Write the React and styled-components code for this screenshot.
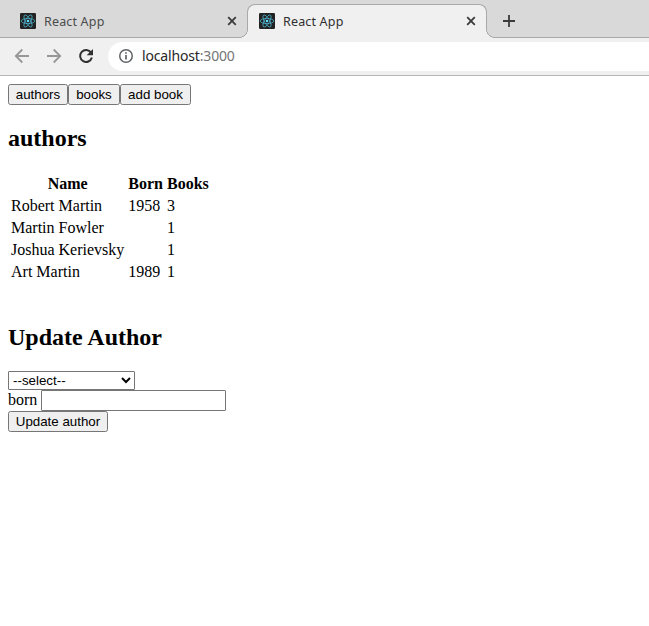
import React from "react";
import styled, { createGlobalStyle } from "styled-components";

const GlobalStyle = createGlobalStyle`
  body { margin: 0; background: #fff; color: #000; font-family: "Liberation Serif", serif; font-size: 16px; }
`;

const TabStrip = styled.div`
  display: flex;
  align-items: flex-end;
  height: 38px;
  box-sizing: border-box;
  background: #d9d9d9;
  box-shadow: inset 0 -1px #a9a9a9;
  font-family: "Noto Sans", sans-serif;
`;

const Tab = styled.div`
  position: relative;
  display: flex;
  align-items: center;
  box-sizing: border-box;
  width: ${(p) => (p.$active ? 240 : 247)}px;
  height: 34px;
  padding: ${(p) => (p.$active ? "0 10px 1px 11px" : "0 10px 0 20px")};
  color: ${(p) => (p.$active ? "#2f2f2f" : "#4b4b4b")};
  ${(p) =>
    p.$active &&
    `
    background: #f0f0f0;
    border: 1px solid #a9a9a9;
    border-bottom: 0;
    border-radius: 8px 8px 0 0;
    &::before, &::after {
      content: "";
      position: absolute;
      bottom: 0;
      width: 9px;
      height: 9px;
    }
    &::before {
      left: -9px;
      background: radial-gradient(circle at 0 0, #d9d9d9 7.8px, #a9a9a9 8.3px 8.7px, #f0f0f0 9.2px);
    }
    &::after {
      right: -9px;
      background: radial-gradient(circle at 100% 0, #d9d9d9 7.8px, #a9a9a9 8.3px 8.7px, #f0f0f0 9.2px);
    }
  `}
`;

const TabTitle = styled.span`
  flex: 1;
  margin-left: 8px;
  padding-top: 1px;
  font-size: 12.5px;
  line-height: 19px;
  letter-spacing: 0.17px;
`;

const Icon = styled.svg`
  display: block;
  flex: none;
`;

const NewTab = styled.div`
  display: flex;
  align-items: center;
  height: 34px;
  margin-left: 15px;
`;

const Toolbar = styled.div`
  display: flex;
  align-items: center;
  box-sizing: border-box;
  height: 38px;
  padding: 0 0 1px 14px;
  background: #f0f0f0;
  border-bottom: 1px solid #b6b6b6;
`;

const NavIcons = styled.div`
  display: flex;
  gap: 16px;
  width: 94px;
`;

const AddressBar = styled.div`
  display: flex;
  align-items: center;
  flex: 1;
  box-sizing: border-box;
  height: 29px;
  padding-left: 11px;
  background: #fff;
  border-radius: 15px 0 0 15px;
  font-family: "Noto Sans", sans-serif;
  font-size: 14px;
  line-height: 20px;
`;

const Url = styled.span`
  margin-left: 9px;
  color: #272727;
  letter-spacing: -0.16px;
`;

const Port = styled.span`
  color: #757575;
`;

const Page = styled.main`
  padding: 8px;
`;

const Nav = styled.nav`
  display: flex;
`;

const Button = styled.button`
  display: block;
  box-sizing: border-box;
  width: ${(p) => p.$width}px;
  height: 21px;
  margin: 0;
  padding: 0;
  white-space: nowrap;
  border: 1px solid #767676;
  border-radius: 2.5px;
  background: #efefef;
  color: #000;
  font: 13.333px "Liberation Sans", sans-serif;
`;

const Heading = styled.h2`
  margin: 0;
  padding: 20px 0;
  font-size: 24px;
  line-height: 27px;
`;

const Table = styled.table`
  border-spacing: 2px;
  line-height: 18px;
  margin-bottom: 20px;

  th, td { padding: 1px; }
  td { text-align: left; }
`;

const Select = styled.select`
  display: block;
  box-sizing: border-box;
  width: 127px;
  height: 19px;
  margin: 0;
  border: 1px solid #767676;
  border-radius: 1px;
  background-color: #fff;
  color: #000;
  font: 13.333px "Liberation Sans", sans-serif;
`;

const Field = styled.label`
  display: flex;
  align-items: center;
  gap: 4px;
  height: 21px;
  line-height: 18px;
`;

const Input = styled.input`
  box-sizing: border-box;
  width: 185px;
  height: 21px;
  margin: 0;
  border: 1px solid #767676;
  border-radius: 1px;
  font: 13.333px "Liberation Sans", sans-serif;
`;

const FieldName = styled.span`
  margin-top: -2px;
`;

const authors = [
  ["Robert Martin", "1958", 3],
  ["Martin Fowler", "", 1],
  ["Joshua Kerievsky", "", 1],
  ["Art Martin", "1989", 1],
];

const ReactLogo = () => (
  <Icon width="16" height="16" viewBox="0 0 16 16">
    <rect width="16" height="16" rx="1.2" fill="#222" />
    <g fill="none" stroke="#4fb3ce" strokeWidth="0.75">
      <ellipse cx="8" cy="8" rx="6.8" ry="2.6" />
      <ellipse cx="8" cy="8" rx="6.8" ry="2.6" transform="rotate(60 8 8)" />
      <ellipse cx="8" cy="8" rx="6.8" ry="2.6" transform="rotate(120 8 8)" />
    </g>
    <circle cx="8" cy="8" r="1.3" fill="#61dafb" />
  </Icon>
);

const Close = () => (
  <Icon width="10" height="10" viewBox="0 0 10 10" stroke="#3a3a3a" strokeWidth="1.8">
    <path d="M1.2 1.2l7.6 7.6M8.8 1.2L1.2 8.8" />
  </Icon>
);

const Arrow = ({ forward }) => (
  <Icon width="16" height="16" viewBox="0 0 16 16" fill="none" stroke="#979797" strokeWidth="1.8">
    <path
      d={forward ? "M1 8h13M7.7 1.5L14.2 8l-6.5 6.5" : "M15 8H2M8.3 1.5L1.8 8l6.5 6.5"}
    />
  </Icon>
);

const Reload = () => (
  <Icon width="16" height="16" viewBox="0 0 16 16">
    <path d="M13.1 4.6A6 6 0 1 0 13.9 9.6" fill="none" stroke="#303030" strokeWidth="2" />
    <path d="M15 1v6.3H8.7z" fill="#303030" />
  </Icon>
);

const Info = () => (
  <Icon width="14" height="14" viewBox="0 0 14 14">
    <circle cx="7" cy="7" r="6.25" fill="none" stroke="#5f6368" strokeWidth="1.5" />
    <path d="M7 6v4.5M7 3.3v1.5" stroke="#5f6368" strokeWidth="1.7" />
  </Icon>
);

const BrowserTab = ({ active }) => (
  <Tab $active={active}>
    <ReactLogo />
    <TabTitle>React App</TabTitle>
    <Close />
  </Tab>
);

export default function App() {
  return (
    <>
      <GlobalStyle />
      <TabStrip>
        <BrowserTab />
        <BrowserTab active />
        <NewTab>
          <Icon width="14" height="14" viewBox="0 0 14 14" stroke="#3a3a3a" strokeWidth="1.8">
            <path d="M7 1v12M1 7h12" />
          </Icon>
        </NewTab>
      </TabStrip>
      <Toolbar>
        <NavIcons>
          <Arrow />
          <Arrow forward />
          <Reload />
        </NavIcons>
        <AddressBar>
          <Info />
          <Url>
            localhost<Port>:3000</Port>
          </Url>
        </AddressBar>
      </Toolbar>
      <Page>
        <Nav>
          <Button $width={60}>authors</Button>
          <Button $width={52}>books</Button>
          <Button $width={71}>add book</Button>
        </Nav>
        <Heading>authors</Heading>
        <Table>
          <thead>
            <tr>
              <th>Name</th>
              <th>Born</th>
              <th>Books</th>
            </tr>
          </thead>
          <tbody>
            {authors.map(([name, born, books]) => (
              <tr key={name}>
                <td>{name}</td>
                <td>{born}</td>
                <td>{books}</td>
              </tr>
            ))}
          </tbody>
        </Table>
        <Heading>Update Author</Heading>
        <Select defaultValue="">
          <option value="">--select--</option>
          {authors.map(([name]) => (
            <option key={name}>{name}</option>
          ))}
        </Select>
        <Field>
          <FieldName>born</FieldName>
          <Input />
        </Field>
        <Button $width={100}>Update author</Button>
      </Page>
    </>
  );
}
